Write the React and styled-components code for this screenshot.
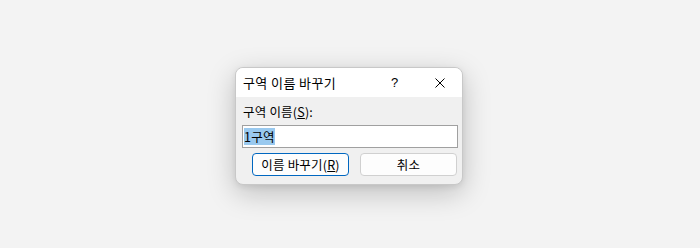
import React from 'react'
import styled, { createGlobalStyle } from 'styled-components'

const Global = createGlobalStyle`
    html, body {
        margin: 0;
        padding: 0;
        background: #f3f3f3;
    }
    body {
        font-family: 'Noto Sans CJK KR', 'Noto Sans', sans-serif;
        font-size: 12.5px;
        color: #000;
    }
`

function App() {
    return (
        <Page>
            <Global />
            <Dialog>
                <TitleBar>
                    <Title>구역 이름 바꾸기</Title>
                    <TitleButton>?</TitleButton>
                    <TitleButton>
                        <svg width="10" height="10" viewBox="0 0 10 10">
                            <path d="M0.5 0.5 L9.5 9.5 M9.5 0.5 L0.5 9.5" stroke="#000" strokeWidth="1" fill="none" />
                        </svg>
                    </TitleButton>
                </TitleBar>
                <Body>
                    <Label>구역 이름(<u>S</u>):</Label>
                    <Input>
                        <Selected>1구역</Selected>
                    </Input>
                    <Buttons>
                        <Button primary>이름 바꾸기(<u>R</u>)</Button>
                        <Button>취소</Button>
                    </Buttons>
                </Body>
            </Dialog>
        </Page>
    )
}

export default App

const Page = styled.div`
    width: 700px;
    height: 248px;
    display: flex;
    align-items: flex-start;
    justify-content: center;
    padding-top: 67px;
    box-sizing: border-box;
`
const Dialog = styled.div`
    width: 228px;
    margin-left: -2px;
    border: 1px solid #c8c8c8;
    border-radius: 8px;
    overflow: hidden;
    background: #f0f0f0;
    box-sizing: border-box;
    box-shadow: 0 8px 28px rgba(0, 0, 0, 0.22), 0 2px 6px rgba(0, 0, 0, 0.08);
`
const TitleBar = styled.div`
    height: 29px;
    background: #fff;
    display: flex;
    align-items: center;
`
const Title = styled.div`
    flex: 1;
    padding-left: 7px;
    line-height: 16px;
    font-size: 13px;
    letter-spacing: 0.4px;
`
const TitleButton = styled.div`
    width: 45px;
    height: 29px;
    display: flex;
    align-items: center;
    justify-content: center;
    font-family: 'Liberation Sans', sans-serif;
    font-size: 13px;
`
const Body = styled.div`
    padding: 7px 4px 8px 6px;
    display: flex;
    flex-direction: column;
`
const Label = styled.div`
    line-height: 16px;
    padding-left: 1px;
    letter-spacing: 0.2px;
`
const Input = styled.div`
    margin-top: 5px;
    height: 23px;
    border: 1px solid #a0a0a0;
    background: #fff;
    box-sizing: border-box;
    display: flex;
    align-items: center;
    padding-left: 1px;
`
const Selected = styled.span`
    background: #99c9ef;
    line-height: 17px;
    letter-spacing: 0.3px;
`
const Buttons = styled.div`
    margin-top: 5px;
    display: flex;
    justify-content: flex-end;
    gap: 11px;
    padding-right: 1px;
`
const Button = styled.div`
    width: 97px;
    height: 23px;
    box-sizing: border-box;
    border-radius: 4px;
    display: flex;
    align-items: center;
    justify-content: center;
    background: #fdfdfd;
    letter-spacing: 0.2px;
    border: ${p => (p.primary ? '1.5px solid #0067c0' : '1px solid #d0d0d0')};
`
